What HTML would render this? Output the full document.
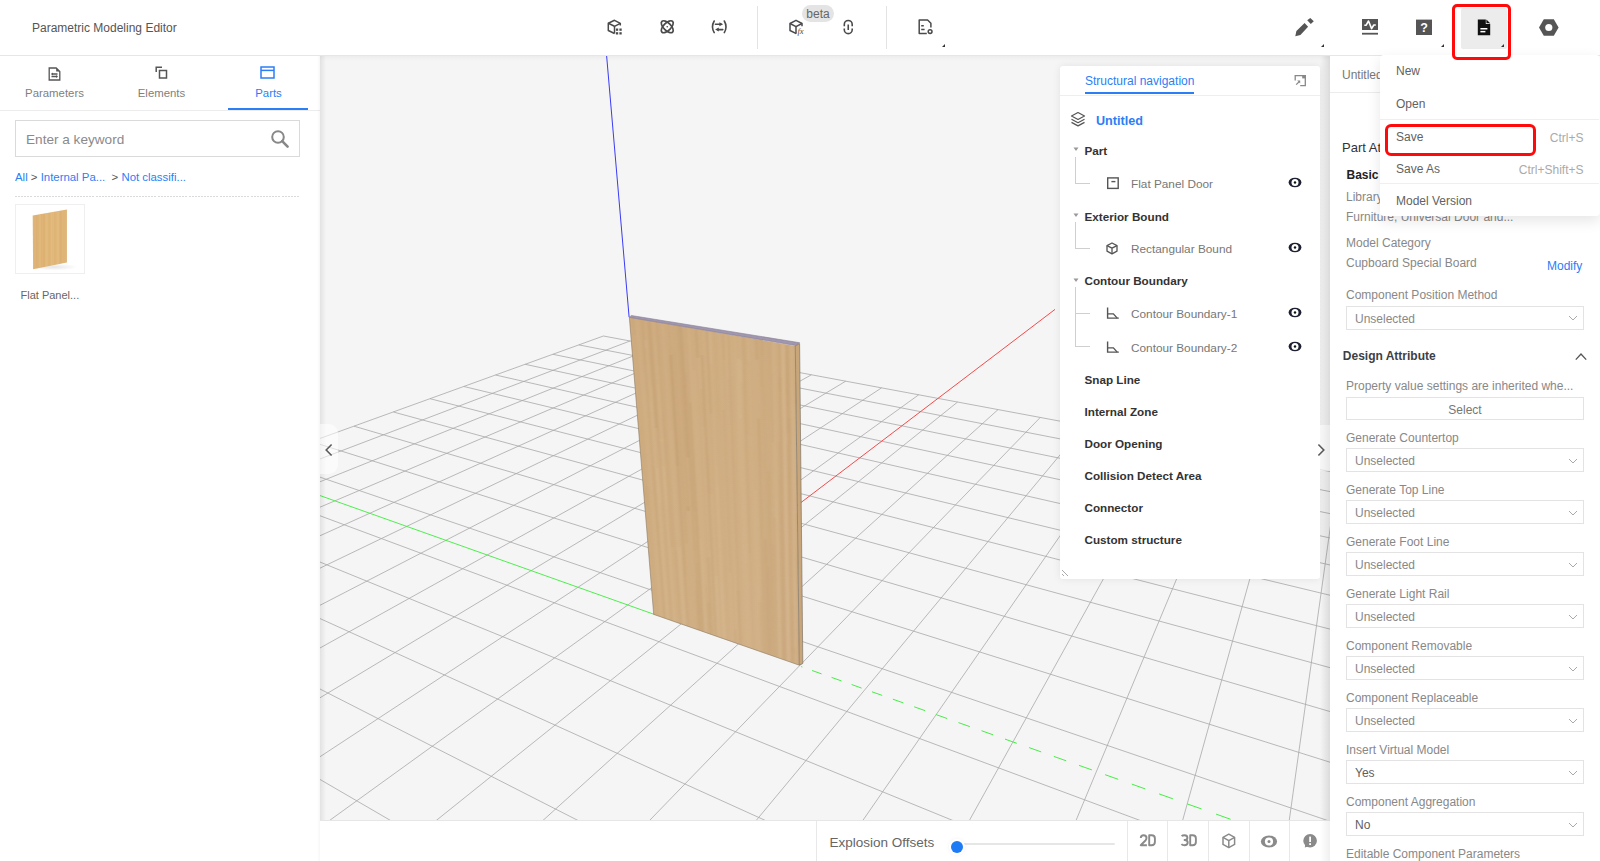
<!DOCTYPE html>
<html><head><meta charset="utf-8">
<style>
*{box-sizing:border-box;margin:0;padding:0}
html,body{width:1600px;height:861px;overflow:hidden;background:#fff;font-family:"Liberation Sans",sans-serif;color:#333}
.a{position:absolute;white-space:nowrap;line-height:1}
#hdr{position:absolute;left:0;top:0;width:1600px;height:56px;background:#fff;border-bottom:1px solid #e6e6e6}
#left{position:absolute;left:0;top:56px;width:320px;height:805px;background:#fff}
#vp{position:absolute;left:320px;top:56px;width:1010px;height:765px;background:#f5f5f5;overflow:hidden}
#bbar{position:absolute;left:320px;top:820px;width:1010px;height:41px;background:#fff;border-top:1px solid #e6e6e6}
#right{position:absolute;left:1330px;top:56px;width:270px;height:805px;background:#fff}
.sep{position:absolute;width:1px;background:#e8e8e8}
svg{position:absolute;overflow:visible}
.tri{position:absolute;width:0;height:0;border-left:4px solid transparent;border-bottom:4px solid #333}
</style></head><body>

<!-- HEADER -->
<div id="hdr"></div>
<div class="a" style="left:32.0px;top:22.3px;font-size:12px;color:#555;font-weight:400;">Parametric Modeling Editor</div>
<svg style="left:606px;top:19px;" width="19" height="17" viewBox="0 0 19 17"><g fill="none" stroke="#4a4a4a" stroke-width="1.5" stroke-linejoin="round">
<path d="M14.3 6.4 V4.3 L8.5 1.3 L2.3 4.3 V11.5 L8.5 14.5"/><path d="M2.3 4.3 L8.5 7.3 L14.3 4.3"/><path d="M8.5 7.3 V14.5"/></g>
<g fill="#4a4a4a"><rect x="9.9" y="9.5" width="2.3" height="2.3"/><rect x="13.4" y="9.5" width="2.3" height="2.3"/><rect x="9.9" y="13.2" width="2.3" height="2.3"/><rect x="13.4" y="13.2" width="2.3" height="2.3"/></g></svg>
<svg style="left:659px;top:19px;" width="17" height="16" viewBox="0 0 17 16"><g fill="none" stroke="#4a4a4a" stroke-width="1.7">
<ellipse cx="8.25" cy="7.75" rx="7.6" ry="3.7" transform="rotate(45 8.25 7.75)"/><ellipse cx="8.25" cy="7.75" rx="7.6" ry="3.7" transform="rotate(-45 8.25 7.75)"/></g><circle cx="8.25" cy="7.75" r="0.8" fill="#4a4a4a"/></svg>
<svg style="left:710px;top:19px;" width="19" height="15" viewBox="0 0 19 15"><g fill="none" stroke="#4a4a4a" stroke-width="1.6" stroke-linecap="round">
<path d="M4.2 2 Q0.8 7.8 4.2 13.6"/><path d="M14.3 2 Q17.7 7.8 14.3 13.6"/>
<path d="M5.4 5.3 H11"/><path d="M7.6 10.6 H12.8"/></g>
<path d="M9.4 3.3 L13.1 5.3 L9.4 7.3Z M8.8 8.6 L5.1 10.6 L8.8 12.6Z" fill="#4a4a4a"/></svg>
<div style="position:absolute;left:757px;top:6px;width:1px;height:43px;background:#e3e3e3"></div>
<div style="position:absolute;left:886px;top:6px;width:1px;height:43px;background:#e3e3e3"></div>
<div style="position:absolute;left:802px;top:5px;width:32px;height:17px;background:#e4e4e4;border-radius:9px"></div>
<div class="a" style="left:618.0px;width:400px;text-align:center;top:8.2px;font-size:12px;color:#666;font-weight:400;">beta</div>
<svg style="left:788px;top:19px;" width="19" height="17" viewBox="0 0 19 17"><g fill="none" stroke="#4a4a4a" stroke-width="1.5" stroke-linejoin="round">
<path d="M14 7.2 V4.5 L8 1.3 L2 4.5 V11.5 L8.3 14.6"/><path d="M2 4.5 L8 7.6 L14 4.5"/><path d="M8 7.6 V14.4"/></g>
<text x="9.4" y="15.4" font-size="8.6" font-style="italic" fill="#4a4a4a" font-family="Liberation Serif">fx</text></svg>
<svg style="left:842px;top:19px;" width="12" height="16" viewBox="0 0 12 16"><g fill="none" stroke="#4a4a4a" stroke-width="1.6">
<path d="M2.3 7.2 V5.4 A3.95 3.95 0 0 1 10.2 5.4 V7.2"/><path d="M2.3 9.4 V10.7 A3.95 3.95 0 0 0 10.2 10.7 V9.4"/><path d="M6.25 5.5 V11"/></g></svg>
<svg style="left:917px;top:19px;" width="17" height="16" viewBox="0 0 17 16"><g fill="none" stroke="#4a4a4a" stroke-width="1.5" stroke-linejoin="round">
<path d="M9.8 14.5 H2.2 V1 H10.6 L13.9 4.2 V8.6"/><path d="M4.2 6.7 H6.8 M4.2 10.5 H7.6"/></g>
<circle cx="13.1" cy="12.6" r="1.9" fill="none" stroke="#4a4a4a" stroke-width="1.5"/></svg>
<div class="tri" style="left:941.5px;top:44px;border-left-width:3.5px;border-bottom-width:3.5px"></div>
<svg style="left:1294px;top:17px;" width="21" height="21" viewBox="0 0 21 21"><path d="M1.3 19.3 L2.4 14 L10.6 6 L14.1 9.8 L6.4 18Z M13.2 3.2 L16.3 1 L19.8 4.3 L16.8 6.9Z" fill="#555"/></svg>
<div class="tri" style="left:1320.5px;top:44px;border-left-width:3.5px;border-bottom-width:3.5px"></div>
<svg style="left:1361px;top:18px;" width="18" height="19" viewBox="0 0 18 19"><path d="M1 1 H17 V12 H1Z" fill="#555"/><path d="M3.3 7.2 H5.2 L7.5 3 L10.6 10.6 L12.8 7 H14.8" fill="none" stroke="#fff" stroke-width="1.6" stroke-linejoin="round"/><rect x="1" y="14.8" width="16" height="1.8" fill="#555"/></svg>
<svg style="left:1415px;top:18px;" width="18" height="18" viewBox="0 0 18 18"><rect x="1" y="1.6" width="16" height="15.4" fill="#555"/><text x="9" y="14" font-size="12.5" font-weight="700" text-anchor="middle" fill="#fff" font-family="Liberation Sans">?</text></svg>
<div class="tri" style="left:1440.5px;top:44px;border-left-width:3.5px;border-bottom-width:3.5px"></div>
<div style="position:absolute;left:1461px;top:8px;width:46px;height:41px;background:#ececec;border-radius:2px"></div>
<svg style="left:1476px;top:18px;" width="16" height="19" viewBox="0 0 16 19"><path d="M1.8 1.5 H9.6 L14.2 6.1 V17.2 H1.8Z" fill="#111"/><path d="M9.8 1.5 V6 H14.2" fill="#fff"/><path d="M10.4 1.5 L14.2 5.3 H10.4Z" fill="#111"/><rect x="4.4" y="10" width="7" height="1.5" fill="#fff"/><rect x="4.4" y="12.9" width="5" height="1.5" fill="#fff"/></svg>
<div class="tri" style="left:1500.5px;top:44px;border-left-width:3.5px;border-bottom-width:3.5px"></div>
<svg style="left:1538px;top:18px;" width="22" height="19" viewBox="0 0 22 19"><path d="M5.8 1.3 H15.8 L20.6 9.5 L15.8 17.7 H5.8 L1 9.5Z" fill="#555"/><circle cx="10.8" cy="9.5" r="3.6" fill="#fff"/></svg>


<!-- LEFT PANEL -->
<div id="left"></div>
<svg style="left:48px;top:66.5px;" width="13" height="14" viewBox="0 0 13 14"><path d="M8.2 1 L11.8 4.6 H8.2Z" fill="#555"/><g fill="none" stroke="#555" stroke-width="1.3"><path d="M1.2 1 H8.2 L11.8 4.6 V13 H1.2Z"/><path d="M3.5 7 H9.5 M3.5 9.5 H9.5"/></g><path d="M5 5.6 L3.3 7 L5 8.4Z M8 8.1 L9.7 9.5 L8 10.9Z" fill="#555"/></svg>
<svg style="left:155px;top:66px;" width="13" height="14" viewBox="0 0 13 14"><g fill="none" stroke="#555" stroke-width="1.5"><path d="M1.2 6 V1.2 H7"/><rect x="4.5" y="4.5" width="7" height="7.5"/></g></svg>
<svg style="left:260px;top:66px;" width="15" height="13" viewBox="0 0 15 13"><g fill="none" stroke="#2b7ef6" stroke-width="1.5"><rect x="1" y="1" width="13" height="11"/><path d="M1 4.4 H14"/></g></svg>
<div class="a" style="left:-145.5px;width:400px;text-align:center;top:87.9px;font-size:11.4px;color:#808080;font-weight:400;">Parameters</div>
<div class="a" style="left:-38.5px;width:400px;text-align:center;top:87.9px;font-size:11.4px;color:#808080;font-weight:400;">Elements</div>
<div class="a" style="left:68.5px;width:400px;text-align:center;top:87.9px;font-size:11.4px;color:#2b7ef6;font-weight:400;">Parts</div>
<div style="position:absolute;left:0px;top:110px;width:320px;height:1px;background:#ececec"></div>
<div style="position:absolute;left:228px;top:108px;width:80px;height:2px;background:#2b7ef6"></div>
<div style="position:absolute;left:15px;top:120px;width:285px;height:37px;border:1px solid #dadada"></div>
<div class="a" style="left:26.0px;top:133.1px;font-size:13.6px;color:#8a8a8a;font-weight:400;">Enter a keyword</div>
<svg style="left:270px;top:129px;" width="20" height="20" viewBox="0 0 20 20"><circle cx="8" cy="8" r="5.8" fill="none" stroke="#888" stroke-width="2"/><path d="M12.2 12.2 L17.6 17.6" stroke="#888" stroke-width="2.6" stroke-linecap="round"/></svg>
<div class="a" style="left:15.0px;top:172.1px;font-size:11.4px;color:#2b7ef6;font-weight:400;"><span style="color:#2b7ef6">All</span><span style="color:#555"> &gt; </span><span style="color:#2b7ef6">Internal Pa...</span><span style="color:#555">&nbsp; &gt; </span><span style="color:#2b7ef6">Not classifi...</span></div>
<div style="position:absolute;left:15px;top:196px;width:285px;height:1px;background:repeating-linear-gradient(90deg,#dadada 0 2px,rgba(255,255,255,0) 2px 3.1px)"></div>
<div style="position:absolute;left:15px;top:204px;width:70px;height:70px;border:1px solid #efefef;background:#fff"></div>
<svg style="left:16px;top:205px;" width="69" height="69" viewBox="0 0 69 69"><defs><radialGradient id="sh" cx="0.5" cy="0.5" r="0.5"><stop offset="0" stop-color="#000" stop-opacity=".10"/><stop offset="1" stop-color="#000" stop-opacity="0"/></radialGradient>
<clipPath id="thc"><polygon points="16.7,10.6 50.9,4.5 50.9,57.4 17.1,64.3"/></clipPath><filter id="tb"><feGaussianBlur stdDeviation="0.4 0.2"/></filter></defs>
<ellipse cx="38" cy="62" rx="24" ry="3.5" fill="url(#sh)"/>
<polygon points="16.7,10.6 50.9,4.5 50.9,57.4 17.1,64.3" fill="#e0b678"/>
<g clip-path="url(#thc)"><g filter="url(#tb)"><line x1="18.7" y1="10.4" x2="18.7" y2="63.9" stroke="#d3a566" stroke-opacity="0.19" stroke-width="1.0"/><line x1="20.7" y1="10.0" x2="20.7" y2="63.5" stroke="#c99a5a" stroke-opacity="0.23" stroke-width="1.3"/><line x1="22.3" y1="9.7" x2="22.3" y2="63.1" stroke="#d3a566" stroke-opacity="0.16" stroke-width="1.1"/><line x1="24.1" y1="9.4" x2="24.1" y2="62.8" stroke="#ebc995" stroke-opacity="0.20" stroke-width="1.3"/><line x1="25.3" y1="9.2" x2="25.3" y2="62.6" stroke="#d3a566" stroke-opacity="0.28" stroke-width="1.0"/><line x1="27.4" y1="8.8" x2="27.4" y2="62.1" stroke="#c99a5a" stroke-opacity="0.15" stroke-width="1.4"/><line x1="28.3" y1="8.6" x2="28.3" y2="62.0" stroke="#c99a5a" stroke-opacity="0.27" stroke-width="0.7"/><line x1="30.2" y1="8.2" x2="30.2" y2="61.6" stroke="#ebc995" stroke-opacity="0.25" stroke-width="1.3"/><line x1="31.7" y1="8.0" x2="31.7" y2="61.3" stroke="#ebc995" stroke-opacity="0.29" stroke-width="0.6"/><line x1="33.1" y1="7.7" x2="33.1" y2="61.0" stroke="#c99a5a" stroke-opacity="0.15" stroke-width="0.7"/><line x1="35.7" y1="7.2" x2="35.7" y2="60.5" stroke="#ebc995" stroke-opacity="0.26" stroke-width="1.3"/><line x1="37.2" y1="6.9" x2="37.2" y2="60.2" stroke="#ebc995" stroke-opacity="0.23" stroke-width="1.0"/><line x1="38.8" y1="6.6" x2="38.8" y2="59.9" stroke="#d3a566" stroke-opacity="0.28" stroke-width="1.1"/><line x1="41.2" y1="6.2" x2="41.2" y2="59.4" stroke="#e9c48c" stroke-opacity="0.30" stroke-width="1.1"/><line x1="42.3" y1="6.0" x2="42.3" y2="59.2" stroke="#e9c48c" stroke-opacity="0.29" stroke-width="1.3"/><line x1="44.2" y1="5.6" x2="44.2" y2="58.8" stroke="#d3a566" stroke-opacity="0.23" stroke-width="1.4"/><line x1="45.4" y1="5.4" x2="45.4" y2="58.6" stroke="#c99a5a" stroke-opacity="0.14" stroke-width="1.3"/><line x1="48.0" y1="4.9" x2="48.0" y2="58.1" stroke="#c99a5a" stroke-opacity="0.18" stroke-width="0.6"/><line x1="50.4" y1="4.5" x2="50.4" y2="57.6" stroke="#c99a5a" stroke-opacity="0.17" stroke-width="1.2"/></g></g></svg>
<div class="a" style="left:20.5px;top:289.9px;font-size:11px;color:#666;font-weight:400;">Flat Panel...</div>
<div style="position:absolute;left:317px;top:56px;width:3px;height:805px;background:linear-gradient(90deg,rgba(0,0,0,0),rgba(0,0,0,.03))"></div>


<!-- VIEWPORT -->
<div id="vp">
  <svg width="1010" height="765" style="left:0;top:0;overflow:hidden">
    <defs>
      <linearGradient id="wood" x1="0" y1="0" x2="1" y2="1">
        <stop offset="0" stop-color="#ceab7f"/>
        <stop offset="0.5" stop-color="#d0ae83"/>
        <stop offset="1" stop-color="#d2b189"/>
      </linearGradient>
    </defs>
    <g stroke="#a8a8a8" stroke-width="0.8" fill="none"><line x1="283.4" y1="280.0" x2="37234.7" y2="7169.5"/><line x1="283.4" y1="280.0" x2="-18770.0" y2="7167.2"/><line x1="258.9" y1="288.9" x2="35491.3" y2="7169.4"/><line x1="310.0" y1="285.0" x2="-17778.3" y2="7167.2"/><line x1="232.9" y1="298.3" x2="33748.0" y2="7169.3"/><line x1="337.6" y1="290.2" x2="-16786.6" y2="7167.3"/><line x1="205.2" y1="308.3" x2="32004.6" y2="7169.3"/><line x1="366.1" y1="295.5" x2="-15794.9" y2="7167.3"/><line x1="175.6" y1="319.0" x2="30261.3" y2="7169.2"/><line x1="395.7" y1="301.0" x2="-14803.2" y2="7167.4"/><line x1="143.9" y1="330.5" x2="28517.9" y2="7169.1"/><line x1="426.4" y1="306.7" x2="-13811.5" y2="7167.4"/><line x1="110.0" y1="342.7" x2="26774.6" y2="7169.0"/><line x1="458.3" y1="312.7" x2="-12819.8" y2="7167.4"/><line x1="73.4" y1="356.0" x2="25031.2" y2="7169.0"/><line x1="491.4" y1="318.8" x2="-11828.1" y2="7167.5"/><line x1="34.0" y1="370.2" x2="23287.9" y2="7168.9"/><line x1="525.7" y1="325.2" x2="-10836.4" y2="7167.5"/><line x1="-8.7" y1="385.6" x2="21544.5" y2="7168.8"/><line x1="561.5" y1="331.9" x2="-9844.7" y2="7167.6"/><line x1="-55.0" y1="402.4" x2="19801.2" y2="7168.8"/><line x1="598.7" y1="338.8" x2="-8853.0" y2="7167.6"/><line x1="-105.4" y1="420.6" x2="18057.8" y2="7168.7"/><line x1="637.5" y1="346.1" x2="-7861.3" y2="7167.6"/><line x1="-160.5" y1="440.5" x2="16314.5" y2="7168.6"/><line x1="678.0" y1="353.6" x2="-6869.6" y2="7167.7"/><line x1="-220.9" y1="462.4" x2="14571.1" y2="7168.5"/><line x1="720.2" y1="361.5" x2="-5877.9" y2="7167.7"/><line x1="-287.6" y1="486.5" x2="12827.8" y2="7168.5"/><line x1="764.3" y1="369.7" x2="-4886.2" y2="7167.8"/><line x1="-361.6" y1="513.2" x2="11084.4" y2="7168.4"/><line x1="810.4" y1="378.3" x2="-3894.5" y2="7167.8"/><line x1="-444.0" y1="543.0" x2="9341.1" y2="7168.3"/><line x1="858.6" y1="387.3" x2="-2902.8" y2="7167.8"/><line x1="-536.4" y1="576.4" x2="7597.7" y2="7168.3"/><line x1="909.2" y1="396.7" x2="-1911.1" y2="7167.9"/><line x1="-640.7" y1="614.1" x2="5854.4" y2="7168.2"/><line x1="962.2" y1="406.6" x2="-919.4" y2="7167.9"/><line x1="-759.5" y1="657.0" x2="4111.0" y2="7168.1"/><line x1="1017.9" y1="417.0" x2="72.3" y2="7168.0"/><line x1="-895.9" y1="706.3" x2="2367.7" y2="7168.1"/><line x1="1076.5" y1="427.9" x2="1064.0" y2="7168.0"/><line x1="-1054.3" y1="763.6" x2="624.3" y2="7168.0"/><line x1="1138.2" y1="439.4" x2="2055.7" y2="7168.0"/><line x1="-1240.2" y1="830.8" x2="-1119.0" y2="7167.9"/><line x1="1203.2" y1="451.5" x2="3047.4" y2="7168.1"/><line x1="-1461.7" y1="910.8" x2="-2862.4" y2="7167.8"/><line x1="1271.8" y1="464.3" x2="4039.1" y2="7168.1"/><line x1="-1730.0" y1="1007.8" x2="-4605.7" y2="7167.8"/><line x1="1344.4" y1="477.9" x2="5030.8" y2="7168.2"/><line x1="-2061.7" y1="1127.7" x2="-6349.1" y2="7167.7"/><line x1="1421.3" y1="492.2" x2="6022.5" y2="7168.2"/><line x1="-2482.3" y1="1279.8" x2="-8092.4" y2="7167.6"/><line x1="1502.9" y1="507.4" x2="7014.2" y2="7168.2"/><line x1="-3033.0" y1="1478.8" x2="-9835.8" y2="7167.6"/><line x1="1589.5" y1="523.6" x2="8005.9" y2="7168.3"/><line x1="-3785.4" y1="1750.8" x2="-11579.1" y2="7167.5"/><line x1="1681.9" y1="540.8" x2="8997.6" y2="7168.3"/><line x1="-4874.9" y1="2144.6" x2="-13322.5" y2="7167.4"/><line x1="1780.4" y1="559.2" x2="9989.3" y2="7168.4"/><line x1="-6593.5" y1="2765.8" x2="-15065.8" y2="7167.3"/><line x1="1885.7" y1="578.8" x2="10981.0" y2="7168.4"/><line x1="-9707.6" y1="3891.4" x2="-16809.2" y2="7167.3"/><line x1="1998.6" y1="599.8" x2="11972.7" y2="7168.4"/><line x1="-17077.9" y1="6555.6" x2="-18552.5" y2="7167.2"/><line x1="2120.0" y1="622.5" x2="12964.4" y2="7168.5"/><line x1="2250.7" y1="646.8" x2="13956.1" y2="7168.5"/><line x1="2391.9" y1="673.2" x2="14947.8" y2="7168.6"/><line x1="2545.0" y1="701.7" x2="15939.5" y2="7168.6"/><line x1="2711.6" y1="732.8" x2="16931.2" y2="7168.6"/><line x1="2893.4" y1="766.7" x2="17922.9" y2="7168.7"/><line x1="3092.6" y1="803.8" x2="18914.6" y2="7168.7"/><line x1="3312.0" y1="844.7" x2="19906.3" y2="7168.8"/><line x1="3554.6" y1="890.0" x2="20898.0" y2="7168.8"/><line x1="3824.5" y1="940.3" x2="21889.7" y2="7168.8"/><line x1="4126.4" y1="996.6" x2="22881.4" y2="7168.9"/><line x1="4466.5" y1="1060.0" x2="23873.1" y2="7168.9"/><line x1="4852.5" y1="1131.9" x2="24864.8" y2="7169.0"/><line x1="5294.3" y1="1214.3" x2="25856.4" y2="7169.0"/><line x1="5805.0" y1="1309.5" x2="26848.1" y2="7169.0"/><line x1="6402.1" y1="1420.9" x2="27839.8" y2="7169.1"/><line x1="7109.5" y1="1552.7" x2="28831.5" y2="7169.1"/><line x1="7960.8" y1="1711.5" x2="29823.2" y2="7169.2"/><line x1="9005.0" y1="1906.2" x2="30814.9" y2="7169.2"/><line x1="10316.1" y1="2150.6" x2="31806.6" y2="7169.2"/><line x1="12011.3" y1="2466.7" x2="32798.3" y2="7169.3"/><line x1="14288.4" y1="2891.2" x2="33790.0" y2="7169.3"/><line x1="17509.1" y1="3491.7" x2="34781.7" y2="7169.4"/><line x1="22413.1" y1="4406.0" x2="35773.4" y2="7169.4"/><line x1="30787.0" y1="5967.3" x2="36765.1" y2="7169.4"/></g>
    <line x1="-665.2" y1="203.1" x2="334.0" y2="558.3" stroke="#45ee45" stroke-width="0.95"/>
<g stroke="#45ee45" stroke-width="1"><line x1="481.2" y1="610.6" x2="482.3" y2="611.0"/><line x1="492.1" y1="614.5" x2="501.6" y2="617.9"/><line x1="511.6" y1="621.4" x2="521.4" y2="624.9"/><line x1="531.6" y1="628.5" x2="541.6" y2="632.1"/><line x1="552.0" y1="635.8" x2="562.2" y2="639.4"/><line x1="572.9" y1="643.2" x2="583.3" y2="646.9"/><line x1="594.2" y1="650.8" x2="605.0" y2="654.6"/><line x1="616.1" y1="658.6" x2="627.1" y2="662.5"/><line x1="638.5" y1="666.6" x2="649.8" y2="670.6"/><line x1="661.5" y1="674.7" x2="673.0" y2="678.8"/><line x1="685.0" y1="683.1" x2="696.8" y2="687.3"/><line x1="709.1" y1="691.6" x2="721.2" y2="695.9"/><line x1="733.8" y1="700.4" x2="746.2" y2="704.8"/><line x1="759.1" y1="709.4" x2="771.9" y2="713.9"/><line x1="785.1" y1="718.7" x2="798.2" y2="723.3"/><line x1="811.8" y1="728.1" x2="825.2" y2="732.9"/><line x1="839.1" y1="737.9" x2="852.9" y2="742.8"/><line x1="867.2" y1="747.9" x2="881.4" y2="752.9"/><line x1="896.1" y1="758.1" x2="910.6" y2="763.3"/><line x1="925.8" y1="768.7" x2="940.7" y2="774.0"/><line x1="956.3" y1="779.5" x2="971.6" y2="785.0"/><line x1="987.6" y1="790.6" x2="1003.4" y2="796.3"/></g>
<line x1="334.0" y1="558.3" x2="735.0" y2="253.4" stroke="#f44a4a" stroke-width="1"/>
<line x1="309.1" y1="261.0" x2="286.6" y2="-0.4" stroke="#3a3af5" stroke-width="1"/>
    
<clipPath id="dclip"><polygon points="309.3,261.2 475.3,289.9 479.3,609.2 333.7,558.4"/></clipPath>
<polygon points="309.3,261.2 475.3,289.9 479.3,609.2 333.7,558.4" fill="url(#wood)"/>
<filter id="blr" x="-5%" y="-5%" width="110%" height="110%"><feGaussianBlur stdDeviation="1.1 0.6"/></filter><g clip-path="url(#dclip)"><g filter="url(#blr)"><line x1="320.1" y1="370.3" x2="335.5" y2="559.0" stroke="#b28b5a" stroke-opacity="0.16" stroke-width="0.90"/><line x1="312.4" y1="261.7" x2="313.9" y2="279.3" stroke="#b8915f" stroke-opacity="0.19" stroke-width="1.28"/><line x1="326.0" y1="430.0" x2="327.6" y2="449.4" stroke="#b8915f" stroke-opacity="0.19" stroke-width="1.28"/><line x1="315.2" y1="262.2" x2="328.7" y2="432.3" stroke="#bf9868" stroke-opacity="0.18" stroke-width="1.09"/><line x1="328.7" y1="432.3" x2="338.9" y2="560.2" stroke="#bf9868" stroke-opacity="0.22" stroke-width="1.09"/><line x1="316.5" y1="262.4" x2="329.8" y2="430.7" stroke="#dfc7a0" stroke-opacity="0.20" stroke-width="1.54"/><line x1="329.8" y1="430.7" x2="340.0" y2="560.6" stroke="#dfc7a0" stroke-opacity="0.16" stroke-width="1.54"/><line x1="323.3" y1="316.6" x2="324.9" y2="337.1" stroke="#dbc096" stroke-opacity="0.10" stroke-width="1.97"/><line x1="324.9" y1="337.1" x2="327.6" y2="370.8" stroke="#dbc096" stroke-opacity="0.16" stroke-width="1.97"/><line x1="327.6" y1="370.8" x2="337.3" y2="495.7" stroke="#dbc096" stroke-opacity="0.11" stroke-width="1.97"/><line x1="337.3" y1="495.7" x2="342.4" y2="561.4" stroke="#dbc096" stroke-opacity="0.14" stroke-width="1.97"/><line x1="322.1" y1="263.4" x2="323.0" y2="275.1" stroke="#b28b5a" stroke-opacity="0.21" stroke-width="1.64"/><line x1="323.0" y1="275.1" x2="325.6" y2="308.8" stroke="#b28b5a" stroke-opacity="0.24" stroke-width="1.64"/><line x1="325.6" y1="308.8" x2="333.3" y2="409.6" stroke="#b28b5a" stroke-opacity="0.18" stroke-width="1.64"/><line x1="333.3" y1="409.6" x2="344.9" y2="562.3" stroke="#b28b5a" stroke-opacity="0.28" stroke-width="1.64"/><line x1="325.6" y1="284.3" x2="326.2" y2="291.8" stroke="#e3cba6" stroke-opacity="0.23" stroke-width="1.79"/><line x1="326.2" y1="291.8" x2="330.2" y2="344.5" stroke="#e3cba6" stroke-opacity="0.10" stroke-width="1.79"/><line x1="330.2" y1="344.5" x2="339.8" y2="472.3" stroke="#e3cba6" stroke-opacity="0.18" stroke-width="1.79"/><line x1="339.8" y1="472.3" x2="346.7" y2="562.9" stroke="#e3cba6" stroke-opacity="0.22" stroke-width="1.79"/><line x1="326.5" y1="264.2" x2="331.3" y2="329.5" stroke="#e3cba6" stroke-opacity="0.09" stroke-width="1.49"/><line x1="331.3" y1="329.5" x2="334.4" y2="370.6" stroke="#e3cba6" stroke-opacity="0.24" stroke-width="1.49"/><line x1="334.4" y1="370.6" x2="337.5" y2="412.0" stroke="#e3cba6" stroke-opacity="0.13" stroke-width="1.49"/><line x1="337.5" y1="412.0" x2="340.1" y2="447.1" stroke="#e3cba6" stroke-opacity="0.29" stroke-width="1.49"/><line x1="340.1" y1="447.1" x2="348.8" y2="563.7" stroke="#e3cba6" stroke-opacity="0.16" stroke-width="1.49"/><line x1="328.0" y1="264.4" x2="334.2" y2="347.9" stroke="#bf9868" stroke-opacity="0.28" stroke-width="2.57"/><line x1="334.2" y1="347.9" x2="335.9" y2="372.0" stroke="#bf9868" stroke-opacity="0.31" stroke-width="2.57"/><line x1="329.7" y1="264.7" x2="329.8" y2="266.0" stroke="#b28b5a" stroke-opacity="0.18" stroke-width="1.16"/><line x1="329.8" y1="266.0" x2="337.8" y2="375.5" stroke="#b28b5a" stroke-opacity="0.30" stroke-width="1.16"/><line x1="337.8" y1="375.5" x2="338.9" y2="390.4" stroke="#b28b5a" stroke-opacity="0.22" stroke-width="1.16"/><line x1="338.9" y1="390.4" x2="351.6" y2="564.7" stroke="#b28b5a" stroke-opacity="0.16" stroke-width="1.16"/><line x1="341.2" y1="383.6" x2="341.2" y2="384.8" stroke="#dfc7a0" stroke-opacity="0.32" stroke-width="1.71"/><line x1="341.2" y1="384.8" x2="341.3" y2="385.5" stroke="#dfc7a0" stroke-opacity="0.14" stroke-width="1.71"/><line x1="343.0" y1="409.8" x2="354.2" y2="565.6" stroke="#dfc7a0" stroke-opacity="0.19" stroke-width="1.71"/><line x1="334.0" y1="265.5" x2="335.5" y2="286.6" stroke="#e3cba6" stroke-opacity="0.12" stroke-width="1.00"/><line x1="335.5" y1="286.6" x2="338.4" y2="328.0" stroke="#e3cba6" stroke-opacity="0.20" stroke-width="1.00"/><line x1="338.4" y1="328.0" x2="347.1" y2="449.9" stroke="#e3cba6" stroke-opacity="0.31" stroke-width="1.00"/><line x1="347.1" y1="449.9" x2="355.4" y2="566.0" stroke="#e3cba6" stroke-opacity="0.19" stroke-width="1.00"/><line x1="336.5" y1="265.9" x2="339.5" y2="309.3" stroke="#bf9868" stroke-opacity="0.24" stroke-width="2.79"/><line x1="339.5" y1="309.3" x2="343.1" y2="359.7" stroke="#bf9868" stroke-opacity="0.15" stroke-width="2.79"/><line x1="343.1" y1="359.7" x2="346.6" y2="410.4" stroke="#bf9868" stroke-opacity="0.22" stroke-width="2.79"/><line x1="346.6" y1="410.4" x2="352.3" y2="491.4" stroke="#bf9868" stroke-opacity="0.17" stroke-width="2.79"/><line x1="340.5" y1="266.6" x2="356.1" y2="495.1" stroke="#b28b5a" stroke-opacity="0.10" stroke-width="1.89"/><line x1="356.1" y1="495.1" x2="361.1" y2="567.9" stroke="#b28b5a" stroke-opacity="0.21" stroke-width="1.89"/><line x1="341.8" y1="266.8" x2="346.3" y2="334.0" stroke="#e3cba6" stroke-opacity="0.17" stroke-width="1.53"/><line x1="346.3" y1="334.0" x2="349.0" y2="374.1" stroke="#e3cba6" stroke-opacity="0.16" stroke-width="1.53"/><line x1="349.0" y1="374.1" x2="362.2" y2="568.3" stroke="#e3cba6" stroke-opacity="0.20" stroke-width="1.53"/><line x1="351.8" y1="374.7" x2="355.1" y2="423.6" stroke="#dfc7a0" stroke-opacity="0.09" stroke-width="2.41"/><line x1="355.1" y1="423.6" x2="359.5" y2="490.7" stroke="#dfc7a0" stroke-opacity="0.08" stroke-width="2.41"/><line x1="359.5" y1="490.7" x2="364.7" y2="569.2" stroke="#dfc7a0" stroke-opacity="0.22" stroke-width="2.41"/><line x1="348.7" y1="268.0" x2="350.3" y2="292.4" stroke="#b28b5a" stroke-opacity="0.11" stroke-width="2.78"/><line x1="350.3" y1="292.4" x2="350.7" y2="298.9" stroke="#b28b5a" stroke-opacity="0.15" stroke-width="2.78"/><line x1="350.7" y1="298.9" x2="357.9" y2="410.2" stroke="#b28b5a" stroke-opacity="0.32" stroke-width="2.78"/><line x1="357.9" y1="410.2" x2="368.3" y2="570.5" stroke="#b28b5a" stroke-opacity="0.20" stroke-width="2.78"/><line x1="365.9" y1="520.7" x2="369.1" y2="570.8" stroke="#dbc096" stroke-opacity="0.12" stroke-width="2.40"/><line x1="353.0" y1="268.7" x2="354.6" y2="295.0" stroke="#b8915f" stroke-opacity="0.15" stroke-width="1.67"/><line x1="354.6" y1="295.0" x2="366.7" y2="487.5" stroke="#b8915f" stroke-opacity="0.24" stroke-width="1.67"/><line x1="357.1" y1="269.5" x2="368.1" y2="450.3" stroke="#b28b5a" stroke-opacity="0.15" stroke-width="2.61"/><line x1="368.1" y1="450.3" x2="368.4" y2="455.1" stroke="#b28b5a" stroke-opacity="0.30" stroke-width="2.61"/><line x1="359.8" y1="269.9" x2="367.7" y2="401.8" stroke="#b28b5a" stroke-opacity="0.26" stroke-width="2.10"/><line x1="375.7" y1="534.9" x2="378.0" y2="573.9" stroke="#b28b5a" stroke-opacity="0.08" stroke-width="2.10"/><line x1="361.7" y1="270.3" x2="362.8" y2="288.8" stroke="#b28b5a" stroke-opacity="0.21" stroke-width="1.45"/><line x1="362.8" y1="288.8" x2="375.0" y2="495.3" stroke="#b28b5a" stroke-opacity="0.26" stroke-width="1.45"/><line x1="375.0" y1="495.3" x2="376.7" y2="524.0" stroke="#b28b5a" stroke-opacity="0.17" stroke-width="1.45"/><line x1="376.7" y1="524.0" x2="377.8" y2="543.3" stroke="#b28b5a" stroke-opacity="0.26" stroke-width="1.45"/><line x1="377.8" y1="543.3" x2="379.7" y2="574.4" stroke="#b28b5a" stroke-opacity="0.28" stroke-width="1.45"/><line x1="365.8" y1="316.1" x2="374.0" y2="455.7" stroke="#b28b5a" stroke-opacity="0.20" stroke-width="0.84"/><line x1="376.9" y1="506.9" x2="380.9" y2="574.9" stroke="#b28b5a" stroke-opacity="0.22" stroke-width="0.84"/><line x1="365.8" y1="271.0" x2="370.1" y2="346.7" stroke="#b8915f" stroke-opacity="0.09" stroke-width="2.57"/><line x1="370.1" y1="346.7" x2="383.3" y2="575.7" stroke="#b8915f" stroke-opacity="0.25" stroke-width="2.57"/><line x1="368.4" y1="271.4" x2="376.2" y2="409.4" stroke="#dfc7a0" stroke-opacity="0.17" stroke-width="1.69"/><line x1="376.2" y1="409.4" x2="380.3" y2="482.7" stroke="#dfc7a0" stroke-opacity="0.15" stroke-width="1.69"/><line x1="380.3" y1="482.7" x2="385.5" y2="576.5" stroke="#dfc7a0" stroke-opacity="0.30" stroke-width="1.69"/><line x1="373.9" y1="313.9" x2="385.7" y2="528.6" stroke="#dbc096" stroke-opacity="0.14" stroke-width="2.65"/><line x1="388.2" y1="546.5" x2="389.9" y2="578.0" stroke="#b28b5a" stroke-opacity="0.23" stroke-width="1.41"/><line x1="376.4" y1="272.8" x2="378.0" y2="301.6" stroke="#b8915f" stroke-opacity="0.28" stroke-width="2.74"/><line x1="388.5" y1="501.4" x2="392.6" y2="578.9" stroke="#b8915f" stroke-opacity="0.21" stroke-width="2.74"/><line x1="378.1" y1="273.1" x2="378.5" y2="279.1" stroke="#e3cba6" stroke-opacity="0.18" stroke-width="1.61"/><line x1="378.5" y1="279.1" x2="381.3" y2="333.1" stroke="#e3cba6" stroke-opacity="0.14" stroke-width="1.61"/><line x1="383.2" y1="370.7" x2="389.7" y2="494.3" stroke="#e3cba6" stroke-opacity="0.11" stroke-width="1.61"/><line x1="389.7" y1="494.3" x2="394.1" y2="579.5" stroke="#e3cba6" stroke-opacity="0.20" stroke-width="1.61"/><line x1="380.8" y1="273.6" x2="382.1" y2="299.3" stroke="#b8915f" stroke-opacity="0.09" stroke-width="2.74"/><line x1="382.1" y1="299.3" x2="396.4" y2="580.3" stroke="#b8915f" stroke-opacity="0.29" stroke-width="2.74"/><line x1="382.3" y1="273.8" x2="388.6" y2="398.4" stroke="#dbc096" stroke-opacity="0.16" stroke-width="2.50"/><line x1="388.6" y1="398.4" x2="390.3" y2="431.8" stroke="#dbc096" stroke-opacity="0.10" stroke-width="2.50"/><line x1="390.3" y1="431.8" x2="390.6" y2="438.5" stroke="#dbc096" stroke-opacity="0.09" stroke-width="2.50"/><line x1="390.6" y1="438.5" x2="397.7" y2="580.7" stroke="#dbc096" stroke-opacity="0.26" stroke-width="2.50"/><line x1="396.1" y1="520.3" x2="399.1" y2="581.2" stroke="#dbc096" stroke-opacity="0.27" stroke-width="2.68"/><line x1="387.1" y1="274.6" x2="391.1" y2="357.8" stroke="#b8915f" stroke-opacity="0.32" stroke-width="1.38"/><line x1="389.7" y1="275.1" x2="391.2" y2="307.8" stroke="#e3cba6" stroke-opacity="0.27" stroke-width="1.75"/><line x1="391.2" y1="307.8" x2="395.9" y2="408.2" stroke="#e3cba6" stroke-opacity="0.13" stroke-width="1.75"/><line x1="395.9" y1="408.2" x2="396.9" y2="427.5" stroke="#e3cba6" stroke-opacity="0.16" stroke-width="1.75"/><line x1="396.9" y1="427.5" x2="401.6" y2="527.2" stroke="#e3cba6" stroke-opacity="0.22" stroke-width="1.75"/><line x1="401.6" y1="527.2" x2="404.2" y2="583.0" stroke="#e3cba6" stroke-opacity="0.31" stroke-width="1.75"/><line x1="395.1" y1="276.0" x2="398.4" y2="350.8" stroke="#b8915f" stroke-opacity="0.09" stroke-width="0.91"/><line x1="398.4" y1="350.8" x2="399.0" y2="363.0" stroke="#b8915f" stroke-opacity="0.15" stroke-width="0.91"/><line x1="404.4" y1="483.0" x2="407.1" y2="544.7" stroke="#b8915f" stroke-opacity="0.14" stroke-width="0.91"/><line x1="407.1" y1="544.7" x2="408.9" y2="584.7" stroke="#b8915f" stroke-opacity="0.08" stroke-width="0.91"/><line x1="399.1" y1="276.7" x2="412.0" y2="575.3" stroke="#e3cba6" stroke-opacity="0.10" stroke-width="1.45"/><line x1="412.0" y1="575.3" x2="412.5" y2="585.9" stroke="#e3cba6" stroke-opacity="0.11" stroke-width="1.45"/><line x1="403.4" y1="353.7" x2="410.4" y2="517.0" stroke="#bf9868" stroke-opacity="0.26" stroke-width="1.36"/><line x1="403.0" y1="277.4" x2="404.0" y2="303.6" stroke="#bf9868" stroke-opacity="0.27" stroke-width="1.41"/><line x1="415.3" y1="573.9" x2="415.8" y2="587.1" stroke="#bf9868" stroke-opacity="0.29" stroke-width="1.41"/><line x1="406.4" y1="278.0" x2="407.0" y2="291.6" stroke="#dbc096" stroke-opacity="0.27" stroke-width="2.24"/><line x1="407.0" y1="291.6" x2="408.3" y2="324.3" stroke="#dbc096" stroke-opacity="0.29" stroke-width="2.24"/><line x1="408.3" y1="324.3" x2="414.4" y2="477.5" stroke="#dbc096" stroke-opacity="0.20" stroke-width="2.24"/><line x1="414.4" y1="477.5" x2="415.5" y2="502.6" stroke="#dbc096" stroke-opacity="0.23" stroke-width="2.24"/><line x1="415.5" y1="502.6" x2="418.9" y2="588.1" stroke="#dbc096" stroke-opacity="0.26" stroke-width="2.24"/><line x1="407.9" y1="278.2" x2="418.0" y2="534.7" stroke="#b28b5a" stroke-opacity="0.19" stroke-width="1.94"/><line x1="418.0" y1="534.7" x2="420.1" y2="588.6" stroke="#b28b5a" stroke-opacity="0.29" stroke-width="1.94"/><line x1="411.0" y1="278.8" x2="412.6" y2="320.1" stroke="#dfc7a0" stroke-opacity="0.12" stroke-width="0.97"/><line x1="414.6" y1="279.4" x2="414.7" y2="280.4" stroke="#e3cba6" stroke-opacity="0.26" stroke-width="0.84"/><line x1="414.7" y1="280.4" x2="420.2" y2="431.7" stroke="#e3cba6" stroke-opacity="0.24" stroke-width="0.84"/><line x1="420.2" y1="431.7" x2="426.1" y2="590.6" stroke="#e3cba6" stroke-opacity="0.16" stroke-width="0.84"/><line x1="418.2" y1="303.1" x2="420.1" y2="358.5" stroke="#dfc7a0" stroke-opacity="0.24" stroke-width="2.29"/><line x1="420.1" y1="358.5" x2="420.3" y2="362.6" stroke="#dfc7a0" stroke-opacity="0.31" stroke-width="2.29"/><line x1="420.3" y1="362.6" x2="425.4" y2="507.1" stroke="#dfc7a0" stroke-opacity="0.16" stroke-width="2.29"/><line x1="425.4" y1="507.1" x2="428.5" y2="591.5" stroke="#dfc7a0" stroke-opacity="0.12" stroke-width="2.29"/><line x1="419.8" y1="280.3" x2="420.7" y2="304.5" stroke="#dfc7a0" stroke-opacity="0.08" stroke-width="2.03"/><line x1="420.7" y1="304.5" x2="421.4" y2="326.3" stroke="#dfc7a0" stroke-opacity="0.24" stroke-width="2.03"/><line x1="421.4" y1="326.3" x2="430.7" y2="592.2" stroke="#dfc7a0" stroke-opacity="0.10" stroke-width="2.03"/><line x1="422.6" y1="280.8" x2="429.9" y2="497.0" stroke="#b8915f" stroke-opacity="0.22" stroke-width="1.77"/><line x1="429.9" y1="497.0" x2="433.1" y2="593.1" stroke="#b8915f" stroke-opacity="0.09" stroke-width="1.77"/><line x1="425.2" y1="281.2" x2="426.1" y2="308.1" stroke="#bf9868" stroke-opacity="0.15" stroke-width="2.33"/><line x1="426.1" y1="308.1" x2="428.4" y2="378.7" stroke="#bf9868" stroke-opacity="0.09" stroke-width="2.33"/><line x1="427.8" y1="281.7" x2="428.6" y2="305.0" stroke="#dbc096" stroke-opacity="0.24" stroke-width="1.57"/><line x1="428.6" y1="305.0" x2="428.7" y2="310.0" stroke="#dbc096" stroke-opacity="0.08" stroke-width="1.57"/><line x1="428.7" y1="310.0" x2="437.7" y2="594.7" stroke="#dbc096" stroke-opacity="0.12" stroke-width="1.57"/><line x1="435.3" y1="434.5" x2="439.2" y2="563.5" stroke="#dbc096" stroke-opacity="0.16" stroke-width="2.57"/><line x1="439.2" y1="563.5" x2="440.2" y2="595.6" stroke="#dbc096" stroke-opacity="0.14" stroke-width="2.57"/><line x1="440.4" y1="546.1" x2="441.9" y2="596.2" stroke="#bf9868" stroke-opacity="0.24" stroke-width="1.55"/><line x1="436.3" y1="283.2" x2="436.9" y2="303.6" stroke="#b8915f" stroke-opacity="0.28" stroke-width="2.23"/><line x1="438.6" y1="362.7" x2="439.8" y2="405.7" stroke="#b8915f" stroke-opacity="0.30" stroke-width="2.23"/><line x1="439.8" y1="405.7" x2="445.1" y2="597.3" stroke="#b8915f" stroke-opacity="0.24" stroke-width="2.23"/><line x1="440.0" y1="283.8" x2="441.3" y2="330.6" stroke="#b8915f" stroke-opacity="0.14" stroke-width="2.47"/><line x1="441.3" y1="330.6" x2="445.3" y2="483.6" stroke="#b8915f" stroke-opacity="0.10" stroke-width="2.47"/><line x1="445.3" y1="483.6" x2="448.1" y2="589.3" stroke="#b8915f" stroke-opacity="0.25" stroke-width="2.47"/><line x1="448.1" y1="589.3" x2="448.4" y2="598.4" stroke="#b8915f" stroke-opacity="0.25" stroke-width="2.47"/><line x1="442.4" y1="284.2" x2="442.8" y2="299.8" stroke="#b28b5a" stroke-opacity="0.23" stroke-width="1.60"/><line x1="442.8" y1="299.8" x2="448.2" y2="510.8" stroke="#b28b5a" stroke-opacity="0.14" stroke-width="1.60"/><line x1="448.2" y1="510.8" x2="450.4" y2="599.1" stroke="#b28b5a" stroke-opacity="0.24" stroke-width="1.60"/><line x1="445.4" y1="284.7" x2="446.7" y2="338.6" stroke="#b8915f" stroke-opacity="0.09" stroke-width="2.62"/><line x1="446.7" y1="338.6" x2="448.6" y2="415.5" stroke="#b8915f" stroke-opacity="0.08" stroke-width="2.62"/><line x1="448.6" y1="415.5" x2="453.1" y2="600.0" stroke="#b8915f" stroke-opacity="0.24" stroke-width="2.62"/><line x1="448.4" y1="285.3" x2="449.0" y2="309.0" stroke="#b8915f" stroke-opacity="0.26" stroke-width="1.40"/><line x1="449.0" y1="309.0" x2="449.3" y2="323.1" stroke="#b8915f" stroke-opacity="0.18" stroke-width="1.40"/><line x1="449.3" y1="323.1" x2="452.1" y2="443.3" stroke="#b8915f" stroke-opacity="0.14" stroke-width="1.40"/><line x1="452.1" y1="443.3" x2="453.1" y2="488.3" stroke="#b8915f" stroke-opacity="0.11" stroke-width="1.40"/><line x1="453.1" y1="488.3" x2="455.7" y2="601.0" stroke="#b8915f" stroke-opacity="0.24" stroke-width="1.40"/><line x1="450.8" y1="285.7" x2="453.0" y2="386.6" stroke="#b8915f" stroke-opacity="0.26" stroke-width="0.98"/><line x1="454.7" y1="461.3" x2="457.8" y2="601.7" stroke="#b8915f" stroke-opacity="0.28" stroke-width="0.98"/><line x1="453.0" y1="286.0" x2="456.4" y2="443.6" stroke="#dfc7a0" stroke-opacity="0.12" stroke-width="1.55"/><line x1="456.4" y1="443.6" x2="456.9" y2="467.7" stroke="#dfc7a0" stroke-opacity="0.22" stroke-width="1.55"/><line x1="456.9" y1="467.7" x2="458.1" y2="524.0" stroke="#dfc7a0" stroke-opacity="0.17" stroke-width="1.55"/><line x1="458.1" y1="524.0" x2="459.7" y2="602.4" stroke="#dfc7a0" stroke-opacity="0.25" stroke-width="1.55"/><line x1="458.6" y1="385.5" x2="459.4" y2="423.5" stroke="#b8915f" stroke-opacity="0.14" stroke-width="1.57"/><line x1="459.4" y1="423.5" x2="461.8" y2="544.7" stroke="#b8915f" stroke-opacity="0.24" stroke-width="1.57"/><line x1="461.8" y1="544.7" x2="462.8" y2="593.4" stroke="#b8915f" stroke-opacity="0.26" stroke-width="1.57"/><line x1="462.8" y1="593.4" x2="463.0" y2="603.5" stroke="#b8915f" stroke-opacity="0.31" stroke-width="1.57"/><line x1="459.2" y1="287.1" x2="459.9" y2="321.7" stroke="#b28b5a" stroke-opacity="0.22" stroke-width="2.51"/><line x1="459.9" y1="321.7" x2="460.1" y2="336.1" stroke="#b28b5a" stroke-opacity="0.30" stroke-width="2.51"/><line x1="460.1" y1="336.1" x2="460.7" y2="365.9" stroke="#b28b5a" stroke-opacity="0.23" stroke-width="2.51"/><line x1="460.7" y1="365.9" x2="462.3" y2="452.8" stroke="#b28b5a" stroke-opacity="0.21" stroke-width="2.51"/><line x1="462.3" y1="452.8" x2="465.2" y2="604.3" stroke="#b28b5a" stroke-opacity="0.24" stroke-width="2.51"/><line x1="461.6" y1="287.5" x2="463.0" y2="361.4" stroke="#dfc7a0" stroke-opacity="0.21" stroke-width="0.80"/><line x1="463.0" y1="361.4" x2="466.9" y2="579.6" stroke="#dfc7a0" stroke-opacity="0.10" stroke-width="0.80"/><line x1="463.4" y1="287.8" x2="463.8" y2="310.2" stroke="#e3cba6" stroke-opacity="0.17" stroke-width="2.33"/><line x1="463.8" y1="310.2" x2="468.9" y2="605.6" stroke="#e3cba6" stroke-opacity="0.19" stroke-width="2.33"/><line x1="465.7" y1="288.2" x2="467.1" y2="376.8" stroke="#b28b5a" stroke-opacity="0.27" stroke-width="0.80"/><line x1="467.3" y1="388.8" x2="470.8" y2="605.1" stroke="#b28b5a" stroke-opacity="0.17" stroke-width="0.80"/><line x1="470.8" y1="605.1" x2="470.8" y2="606.2" stroke="#b28b5a" stroke-opacity="0.18" stroke-width="0.80"/><line x1="466.7" y1="288.4" x2="467.7" y2="350.2" stroke="#b28b5a" stroke-opacity="0.28" stroke-width="1.41"/><line x1="467.7" y1="350.2" x2="471.8" y2="606.6" stroke="#b28b5a" stroke-opacity="0.21" stroke-width="1.41"/><line x1="468.0" y1="288.6" x2="470.4" y2="445.6" stroke="#bf9868" stroke-opacity="0.23" stroke-width="2.65"/><line x1="470.4" y1="445.6" x2="471.4" y2="510.1" stroke="#bf9868" stroke-opacity="0.12" stroke-width="2.65"/><line x1="471.4" y1="510.1" x2="472.9" y2="607.0" stroke="#bf9868" stroke-opacity="0.13" stroke-width="2.65"/><line x1="470.1" y1="362.3" x2="470.5" y2="388.1" stroke="#b28b5a" stroke-opacity="0.24" stroke-width="0.93"/><line x1="470.5" y1="388.1" x2="472.9" y2="550.0" stroke="#b28b5a" stroke-opacity="0.09" stroke-width="0.93"/><line x1="472.9" y1="550.0" x2="473.6" y2="597.7" stroke="#b28b5a" stroke-opacity="0.30" stroke-width="0.93"/><line x1="473.6" y1="597.7" x2="473.8" y2="607.3" stroke="#b28b5a" stroke-opacity="0.16" stroke-width="0.93"/><line x1="474.9" y1="591.4" x2="475.2" y2="607.8" stroke="#bf9868" stroke-opacity="0.13" stroke-width="2.62"/><line x1="472.3" y1="289.4" x2="473.1" y2="348.1" stroke="#dfc7a0" stroke-opacity="0.14" stroke-width="1.63"/><line x1="473.1" y1="348.1" x2="476.6" y2="608.3" stroke="#dfc7a0" stroke-opacity="0.23" stroke-width="1.63"/><line x1="474.3" y1="289.7" x2="475.0" y2="350.6" stroke="#b8915f" stroke-opacity="0.15" stroke-width="2.66"/><line x1="475.0" y1="350.6" x2="476.4" y2="457.2" stroke="#b8915f" stroke-opacity="0.10" stroke-width="2.66"/><line x1="476.4" y1="457.2" x2="477.0" y2="498.0" stroke="#b8915f" stroke-opacity="0.23" stroke-width="2.66"/><line x1="477.0" y1="498.0" x2="478.4" y2="608.9" stroke="#b8915f" stroke-opacity="0.27" stroke-width="2.66"/></g></g>
<polygon points="309.3,261.4 311.3,259.5 479.6,286.7 475.5,289.5" fill="#a096ae" stroke="#847b94" stroke-width="0.6"/>
<polygon points="475.3,289.9 479.6,287.6 482.8,607.5 479.3,609.2" fill="#c8a67a" stroke="#7d7468" stroke-width="0.7"/>
<polyline points="309.3,260.7 333.7,558.4 479.3,609.2" fill="none" stroke="#8a7a66" stroke-width="0.6"/>

  </svg>
  <div style="position:absolute;left:0;top:0;width:6px;height:765px;background:linear-gradient(90deg,rgba(0,0,0,.08),rgba(0,0,0,0))"></div>
  <div style="position:absolute;left:1000px;top:0;width:10px;height:765px;background:linear-gradient(90deg,rgba(0,0,0,0),rgba(0,0,0,.05))"></div>
</div>
<div style="position:absolute;left:320px;top:56px;width:1010px;height:5px;background:linear-gradient(180deg,rgba(0,0,0,.035),rgba(0,0,0,0))"></div>
<div style="position:absolute;left:320px;top:424px;width:18px;height:50px;background:rgba(255,255,255,.55);border-radius:0 9px 9px 0"></div>
<svg style="left:324px;top:443px;" width="10" height="14" viewBox="0 0 10 14"><path d="M7.6 1.5 L2.2 7 L7.6 12.5" fill="none" stroke="#5a5a5a" stroke-width="1.6"/></svg>
<div style="position:absolute;left:1060px;top:66px;width:260px;height:513px;background:#fff;box-shadow:0 0 8px rgba(0,0,0,.08);border-radius:3px"></div>
<div class="a" style="left:1085.0px;top:74.9px;font-size:12px;color:#2b7ef6;font-weight:400;">Structural navigation</div>
<div style="position:absolute;left:1060px;top:95px;width:260px;height:1px;background:#eeeeee"></div>
<div style="position:absolute;left:1085px;top:92px;width:109px;height:2px;background:#2b7ef6"></div>
<svg style="left:1293px;top:74px;" width="14" height="13" viewBox="0 0 14 13"><g fill="none" stroke="#888" stroke-width="1.3"><path d="M2.2 6.6 V1.6 H12.3 V11.6 H7.2"/><path d="M3.2 10.6 L6.2 7.6"/></g><rect x="9.2" y="1.2" width="3.4" height="3.2" fill="#888"/><path d="M4.2 6.6 H7.2 V9.6Z" fill="#888"/></svg>
<svg style="left:1070px;top:111px;" width="16" height="17" viewBox="0 0 16 17"><g fill="none" stroke="#555" stroke-width="1.2" stroke-linejoin="round"><path d="M8 1.5 L14.5 5 L8 8.5 L1.5 5Z"/><path d="M1.5 8.2 L8 11.7 L14.5 8.2"/><path d="M1.5 11.4 L8 14.9 L14.5 11.4"/></g></svg>
<div class="a" style="left:1096.0px;top:115.1px;font-size:12.6px;color:#2b7ef6;font-weight:700;">Untitled</div>
<div class="a" style="left:1084.5px;top:144.7px;font-size:11.7px;color:#333;font-weight:700;">Part</div>
<svg style="left:1073px;top:147.1px;" width="6" height="5" viewBox="0 0 6 5"><path d="M0.5 0.5 H5.5 L3 4Z" fill="#999"/></svg>
<div class="a" style="left:1084.5px;top:210.9px;font-size:11.7px;color:#333;font-weight:700;">Exterior Bound</div>
<svg style="left:1073px;top:213.3px;" width="6" height="5" viewBox="0 0 6 5"><path d="M0.5 0.5 H5.5 L3 4Z" fill="#999"/></svg>
<div class="a" style="left:1084.5px;top:275.3px;font-size:11.7px;color:#333;font-weight:700;">Contour Boundary</div>
<svg style="left:1073px;top:277.7px;" width="6" height="5" viewBox="0 0 6 5"><path d="M0.5 0.5 H5.5 L3 4Z" fill="#999"/></svg>
<div style="position:absolute;left:1075px;top:157px;width:1px;height:27px;background:#cfcfcf"></div>
<div style="position:absolute;left:1075px;top:183px;width:15px;height:1px;background:#cfcfcf"></div>
<div style="position:absolute;left:1075px;top:222px;width:1px;height:27px;background:#cfcfcf"></div>
<div style="position:absolute;left:1075px;top:248px;width:15px;height:1px;background:#cfcfcf"></div>
<div style="position:absolute;left:1075px;top:287px;width:1px;height:60px;background:#cfcfcf"></div>
<div style="position:absolute;left:1075px;top:313px;width:15px;height:1px;background:#cfcfcf"></div>
<div style="position:absolute;left:1075px;top:346px;width:15px;height:1px;background:#cfcfcf"></div>
<svg style="left:1106px;top:177px;" width="13" height="13" viewBox="0 0 13 13"><g fill="none" stroke="#555" stroke-width="1.4"><rect x="1.7" y="0.9" width="10.5" height="10.5"/><path d="M5.4 4.6 H9.4"/></g></svg>
<div class="a" style="left:1131.0px;top:178.6px;font-size:11.8px;color:#777;font-weight:400;">Flat Panel Door</div>
<svg style="left:1287.5px;top:177.1px;" width="14" height="11" viewBox="0 0 14 11"><ellipse cx="7" cy="5.5" rx="6.4" ry="4.8" fill="#1c2030"/><circle cx="7" cy="5.5" r="3.5" fill="#fff"/><circle cx="7" cy="5.5" r="1.2" fill="#111"/></svg>
<svg style="left:1106px;top:242px;" width="13" height="13" viewBox="0 0 13 13"><g fill="none" stroke="#555" stroke-width="1.3" stroke-linejoin="round"><path d="M6 1 L11 3.6 V9.2 L6 11.8 L1 9.2 V3.6Z"/><path d="M1 3.6 L6 6.2 L11 3.6 M6 6.2 V11.8"/></g></svg>
<div class="a" style="left:1131.0px;top:244.0px;font-size:11.8px;color:#777;font-weight:400;">Rectangular Bound</div>
<svg style="left:1287.5px;top:242.1px;" width="14" height="11" viewBox="0 0 14 11"><ellipse cx="7" cy="5.5" rx="6.4" ry="4.8" fill="#1c2030"/><circle cx="7" cy="5.5" r="3.5" fill="#fff"/><circle cx="7" cy="5.5" r="1.2" fill="#111"/></svg>
<svg style="left:1106px;top:307px;" width="13" height="13" viewBox="0 0 13 13"><g fill="none" stroke="#555" stroke-width="1.4"><path d="M1.6 0.6 V11.1 H12.8"/><path d="M1.6 6.9 H7.4 L11.2 11.1"/></g></svg>
<div class="a" style="left:1131.0px;top:309.4px;font-size:11.8px;color:#777;font-weight:400;">Contour Boundary-1</div>
<svg style="left:1287.5px;top:307.1px;" width="14" height="11" viewBox="0 0 14 11"><ellipse cx="7" cy="5.5" rx="6.4" ry="4.8" fill="#1c2030"/><circle cx="7" cy="5.5" r="3.5" fill="#fff"/><circle cx="7" cy="5.5" r="1.2" fill="#111"/></svg>
<svg style="left:1106px;top:341px;" width="13" height="13" viewBox="0 0 13 13"><g fill="none" stroke="#555" stroke-width="1.4"><path d="M1.6 0.6 V11.1 H12.8"/><path d="M1.6 6.9 H7.4 L11.2 11.1"/></g></svg>
<div class="a" style="left:1131.0px;top:342.8px;font-size:11.8px;color:#777;font-weight:400;">Contour Boundary-2</div>
<svg style="left:1287.5px;top:341.1px;" width="14" height="11" viewBox="0 0 14 11"><ellipse cx="7" cy="5.5" rx="6.4" ry="4.8" fill="#1c2030"/><circle cx="7" cy="5.5" r="3.5" fill="#fff"/><circle cx="7" cy="5.5" r="1.2" fill="#111"/></svg>
<div class="a" style="left:1084.5px;top:373.8px;font-size:11.7px;color:#333;font-weight:700;">Snap Line</div>
<div class="a" style="left:1084.5px;top:405.8px;font-size:11.7px;color:#333;font-weight:700;">Internal Zone</div>
<div class="a" style="left:1084.5px;top:437.9px;font-size:11.7px;color:#333;font-weight:700;">Door Opening</div>
<div class="a" style="left:1084.5px;top:470.3px;font-size:11.7px;color:#333;font-weight:700;">Collision Detect Area</div>
<div class="a" style="left:1084.5px;top:502.3px;font-size:11.7px;color:#333;font-weight:700;">Connector</div>
<div class="a" style="left:1084.5px;top:534.4px;font-size:11.7px;color:#333;font-weight:700;">Custom structure</div>
<svg style="left:1061px;top:567px;" width="10" height="10" viewBox="0 0 10 10"><path d="M1 3 L7 9 M1 7 L3 9" stroke="#aaa" stroke-width="1"/></svg>
<div style="position:absolute;left:1320px;top:425px;width:10px;height:46px;background:rgba(255,255,255,.6)"></div>
<svg style="left:1316px;top:443px;" width="10" height="14" viewBox="0 0 10 14"><path d="M2.4 1.5 L7.8 7 L2.4 12.5" fill="none" stroke="#5a5a5a" stroke-width="1.6"/></svg>


<!-- BOTTOM BAR -->
<div id="bbar"></div>
<div style="position:absolute;left:816px;top:821px;width:1px;height:40px;background:#e8e8e8"></div>
<div style="position:absolute;left:1127px;top:821px;width:1px;height:40px;background:#e8e8e8"></div>
<div style="position:absolute;left:1167px;top:821px;width:1px;height:40px;background:#e8e8e8"></div>
<div style="position:absolute;left:1208px;top:821px;width:1px;height:40px;background:#e8e8e8"></div>
<div style="position:absolute;left:1249px;top:821px;width:1px;height:40px;background:#e8e8e8"></div>
<div style="position:absolute;left:1289px;top:821px;width:1px;height:40px;background:#e8e8e8"></div>
<div class="a" style="left:829.5px;top:835.5px;font-size:13.5px;color:#666;font-weight:400;">Explosion Offsets</div>
<div style="position:absolute;left:957px;top:843px;width:158px;height:2px;background:#e6e6e6;border-radius:1px"></div>
<div style="position:absolute;left:951px;top:840.5px;width:12px;height:12.0px;background:#1f7af5;border-radius:50%;box-shadow:0 0 0 2px #fff,0 0 4px 2px rgba(0,0,0,.06)"></div>
<svg style="left:1139px;top:834px;" width="18" height="14" viewBox="0 0 18 14"><g fill="none" stroke="#8a8a8a" stroke-width="1.9" stroke-linejoin="round"><path d="M1.8 4 C1.8 2.2 3 1.2 4.6 1.2 C6.3 1.2 7.5 2.2 7.5 3.9 C7.5 5.1 7 5.9 6.2 6.8 L1.7 11.2 H7.9"/><path d="M10.2 1.2 H12.6 C14.8 1.2 15.9 2.3 15.9 4.4 V8 C15.9 10.1 14.8 11.2 12.6 11.2 H10.2Z"/></g></svg>
<svg style="left:1179.5px;top:834px;" width="18" height="14" viewBox="0 0 18 14"><g fill="none" stroke="#8a8a8a" stroke-width="1.9" stroke-linejoin="round"><path d="M1.6 2.2 C2.3 1.5 3.2 1.2 4.4 1.2 C6.2 1.2 7.4 2.1 7.4 3.7 C7.4 5.1 6.4 6 4.7 6 H3.8 M4.7 6 C6.6 6 7.7 7 7.7 8.6 C7.7 10.3 6.4 11.3 4.5 11.3 C3.2 11.3 2.2 10.9 1.4 10.1"/><path d="M10.2 1.2 H12.6 C14.8 1.2 15.9 2.3 15.9 4.4 V8 C15.9 10.1 14.8 11.2 12.6 11.2 H10.2Z"/></g></svg>
<svg style="left:1221px;top:833px;" width="16" height="16" viewBox="0 0 16 16"><g fill="none" stroke="#8a8a8a" stroke-width="1.5" stroke-linejoin="round"><path d="M7.8 1.2 L13.6 4.4 V11.4 L7.8 14.6 L2 11.4 V4.4Z"/><path d="M2 4.4 L7.8 7.6 L13.6 4.4 M7.8 7.6 V14.6"/></g></svg>
<svg style="left:1260px;top:835px;" width="18" height="13" viewBox="0 0 18 13"><ellipse cx="9" cy="6.5" rx="8.1" ry="6" fill="#8a8a8a"/><circle cx="9" cy="6.5" r="4.1" fill="#fff"/><circle cx="9" cy="6.5" r="1.5" fill="#8a8a8a"/></svg>
<svg style="left:1302px;top:833px;" width="16" height="16" viewBox="0 0 16 16"><circle cx="8.1" cy="7.7" r="6.8" fill="#8a8a8a"/><path d="M3.2 11.5 L2.8 14.6 L6.2 13.6Z" fill="#8a8a8a"/><rect x="7.2" y="3.6" width="1.8" height="5.4" fill="#fff"/><rect x="7.2" y="10.2" width="1.8" height="1.8" fill="#fff"/></svg>


<!-- RIGHT PANEL -->
<div id="right"></div>
<div style="position:absolute;left:1320px;top:56px;width:10px;height:805px;background:linear-gradient(90deg,rgba(0,0,0,0),rgba(0,0,0,.06))"></div>
<div class="a" style="left:1342.0px;top:68.6px;font-size:12px;color:#777;font-weight:400;">Untitled</div>
<div style="position:absolute;left:1330px;top:92px;width:270px;height:1px;background:#ececec"></div>
<div class="a" style="left:1342.0px;top:141.2px;font-size:13px;color:#333;font-weight:400;">Part Attribute</div>
<div class="a" style="left:1346.5px;top:169.0px;font-size:12px;color:#222;font-weight:700;">Basic Information</div>
<div class="a" style="left:1346.0px;top:191.0px;font-size:12px;color:#888;font-weight:400;">Library</div>
<div class="a" style="left:1346.0px;top:211.2px;font-size:12px;color:#888;font-weight:400;">Furniture, Universal Door and...</div>
<div class="a" style="left:1346.0px;top:236.9px;font-size:12px;color:#888;font-weight:400;">Model Category</div>
<div class="a" style="left:1346.0px;top:256.8px;font-size:12px;color:#888;font-weight:400;">Cupboard Special Board</div>
<div class="a" style="left:1547.0px;top:260.1px;font-size:12px;color:#2b7ef6;font-weight:400;">Modify</div>
<div class="a" style="left:1346.0px;top:288.8px;font-size:12px;color:#888;font-weight:400;">Component Position Method</div>
<div style="position:absolute;left:1346px;top:305.5px;width:238px;height:24.0px;border:1px solid #e3e3e3;background:#fff"></div>
<div class="a" style="left:1355.0px;top:312.6px;font-size:12px;color:#888;font-weight:400;">Unselected</div>
<svg style="left:1568px;top:315.0px;" width="10" height="6" viewBox="0 0 10 6"><path d="M1 1 L5 5 L9 1" fill="none" stroke="#aaa" stroke-width="1"/></svg>
<div class="a" style="left:1342.8px;top:350.2px;font-size:12px;color:#3c3f46;font-weight:700;">Design Attribute</div>
<svg style="left:1575px;top:351.5px;" width="12" height="9" viewBox="0 0 12 9"><path d="M0.8 7.6 L6 2 L11.2 7.6" fill="none" stroke="#555" stroke-width="1.3"/></svg>
<div class="a" style="left:1346.0px;top:379.8px;font-size:12px;color:#888;font-weight:400;">Property value settings are inherited whe...</div>
<div style="position:absolute;left:1346px;top:396.5px;width:238px;height:23.0px;border:1px solid #e3e3e3"></div>
<div class="a" style="left:1265.0px;width:400px;text-align:center;top:404.1px;font-size:12px;color:#777;font-weight:400;">Select</div>
<div class="a" style="left:1346.0px;top:431.9px;font-size:12px;color:#888;font-weight:400;">Generate Countertop</div>
<div style="position:absolute;left:1346px;top:448.1px;width:238px;height:24.0px;border:1px solid #e3e3e3;background:#fff"></div>
<div class="a" style="left:1355.0px;top:455.2px;font-size:12px;color:#888;font-weight:400;">Unselected</div>
<svg style="left:1568px;top:457.6px;" width="10" height="6" viewBox="0 0 10 6"><path d="M1 1 L5 5 L9 1" fill="none" stroke="#aaa" stroke-width="1"/></svg>
<div class="a" style="left:1346.0px;top:483.9px;font-size:12px;color:#888;font-weight:400;">Generate Top Line</div>
<div style="position:absolute;left:1346px;top:500.1px;width:238px;height:24.0px;border:1px solid #e3e3e3;background:#fff"></div>
<div class="a" style="left:1355.0px;top:507.2px;font-size:12px;color:#888;font-weight:400;">Unselected</div>
<svg style="left:1568px;top:509.6px;" width="10" height="6" viewBox="0 0 10 6"><path d="M1 1 L5 5 L9 1" fill="none" stroke="#aaa" stroke-width="1"/></svg>
<div class="a" style="left:1346.0px;top:535.9px;font-size:12px;color:#888;font-weight:400;">Generate Foot Line</div>
<div style="position:absolute;left:1346px;top:552.0999999999999px;width:238px;height:24.0px;border:1px solid #e3e3e3;background:#fff"></div>
<div class="a" style="left:1355.0px;top:559.2px;font-size:12px;color:#888;font-weight:400;">Unselected</div>
<svg style="left:1568px;top:561.5999999999999px;" width="10" height="6" viewBox="0 0 10 6"><path d="M1 1 L5 5 L9 1" fill="none" stroke="#aaa" stroke-width="1"/></svg>
<div class="a" style="left:1346.0px;top:587.9px;font-size:12px;color:#888;font-weight:400;">Generate Light Rail</div>
<div style="position:absolute;left:1346px;top:604.0999999999999px;width:238px;height:24.0px;border:1px solid #e3e3e3;background:#fff"></div>
<div class="a" style="left:1355.0px;top:611.2px;font-size:12px;color:#888;font-weight:400;">Unselected</div>
<svg style="left:1568px;top:613.5999999999999px;" width="10" height="6" viewBox="0 0 10 6"><path d="M1 1 L5 5 L9 1" fill="none" stroke="#aaa" stroke-width="1"/></svg>
<div class="a" style="left:1346.0px;top:639.9px;font-size:12px;color:#888;font-weight:400;">Component Removable</div>
<div style="position:absolute;left:1346px;top:656.0999999999999px;width:238px;height:24.0px;border:1px solid #e3e3e3;background:#fff"></div>
<div class="a" style="left:1355.0px;top:663.2px;font-size:12px;color:#888;font-weight:400;">Unselected</div>
<svg style="left:1568px;top:665.5999999999999px;" width="10" height="6" viewBox="0 0 10 6"><path d="M1 1 L5 5 L9 1" fill="none" stroke="#aaa" stroke-width="1"/></svg>
<div class="a" style="left:1346.0px;top:691.9px;font-size:12px;color:#888;font-weight:400;">Component Replaceable</div>
<div style="position:absolute;left:1346px;top:708.0999999999999px;width:238px;height:24.0px;border:1px solid #e3e3e3;background:#fff"></div>
<div class="a" style="left:1355.0px;top:715.2px;font-size:12px;color:#888;font-weight:400;">Unselected</div>
<svg style="left:1568px;top:717.5999999999999px;" width="10" height="6" viewBox="0 0 10 6"><path d="M1 1 L5 5 L9 1" fill="none" stroke="#aaa" stroke-width="1"/></svg>
<div class="a" style="left:1346.0px;top:743.9px;font-size:12px;color:#888;font-weight:400;">Insert Virtual Model</div>
<div style="position:absolute;left:1346px;top:760.0999999999999px;width:238px;height:24.0px;border:1px solid #e3e3e3;background:#fff"></div>
<div class="a" style="left:1355.0px;top:767.2px;font-size:12px;color:#606060;font-weight:400;">Yes</div>
<svg style="left:1568px;top:769.5999999999999px;" width="10" height="6" viewBox="0 0 10 6"><path d="M1 1 L5 5 L9 1" fill="none" stroke="#aaa" stroke-width="1"/></svg>
<div class="a" style="left:1346.0px;top:795.9px;font-size:12px;color:#888;font-weight:400;">Component Aggregation</div>
<div style="position:absolute;left:1346px;top:812.0999999999999px;width:238px;height:24.0px;border:1px solid #e3e3e3;background:#fff"></div>
<div class="a" style="left:1355.0px;top:819.2px;font-size:12px;color:#606060;font-weight:400;">No</div>
<svg style="left:1568px;top:821.5999999999999px;" width="10" height="6" viewBox="0 0 10 6"><path d="M1 1 L5 5 L9 1" fill="none" stroke="#aaa" stroke-width="1"/></svg>
<div class="a" style="left:1346.0px;top:847.9px;font-size:12px;color:#888;font-weight:400;">Editable Component Parameters</div>


<div style="position:absolute;left:1380px;top:55px;width:220px;height:160.5px;background:#fff;border-radius:4px;box-shadow:0 5px 14px rgba(0,0,0,.10)"></div>
<div class="a" style="left:1396.0px;top:65.4px;font-size:12px;color:#626262;font-weight:400;">New</div>
<div class="a" style="left:1396.0px;top:97.8px;font-size:12px;color:#626262;font-weight:400;">Open</div>
<div style="position:absolute;left:1380px;top:119px;width:219px;height:1px;background:#efefef"></div>
<div class="a" style="left:1396.0px;top:131.3px;font-size:12px;color:#626262;font-weight:400;">Save</div>
<div class="a" style="left:1183.5px;width:400px;text-align:right;top:131.8px;font-size:12px;color:#aaa;font-weight:400;">Ctrl+S</div>
<div class="a" style="left:1396.0px;top:163.3px;font-size:12px;color:#626262;font-weight:400;">Save As</div>
<div class="a" style="left:1183.5px;width:400px;text-align:right;top:163.8px;font-size:12px;color:#aaa;font-weight:400;">Ctrl+Shift+S</div>
<div style="position:absolute;left:1380px;top:183px;width:219px;height:1px;background:#efefef"></div>
<div class="a" style="left:1396.0px;top:194.8px;font-size:12px;color:#626262;font-weight:400;">Model Version</div>
<div style="position:absolute;left:1385px;top:124px;width:151px;height:31.69999999999999px;border:3.5px solid #ff0a0a;border-radius:6px"></div>
<div style="position:absolute;left:1452px;top:4px;width:58.5px;height:56px;border:3.5px solid #ff0a0a;border-radius:5px"></div>

</body></html>
